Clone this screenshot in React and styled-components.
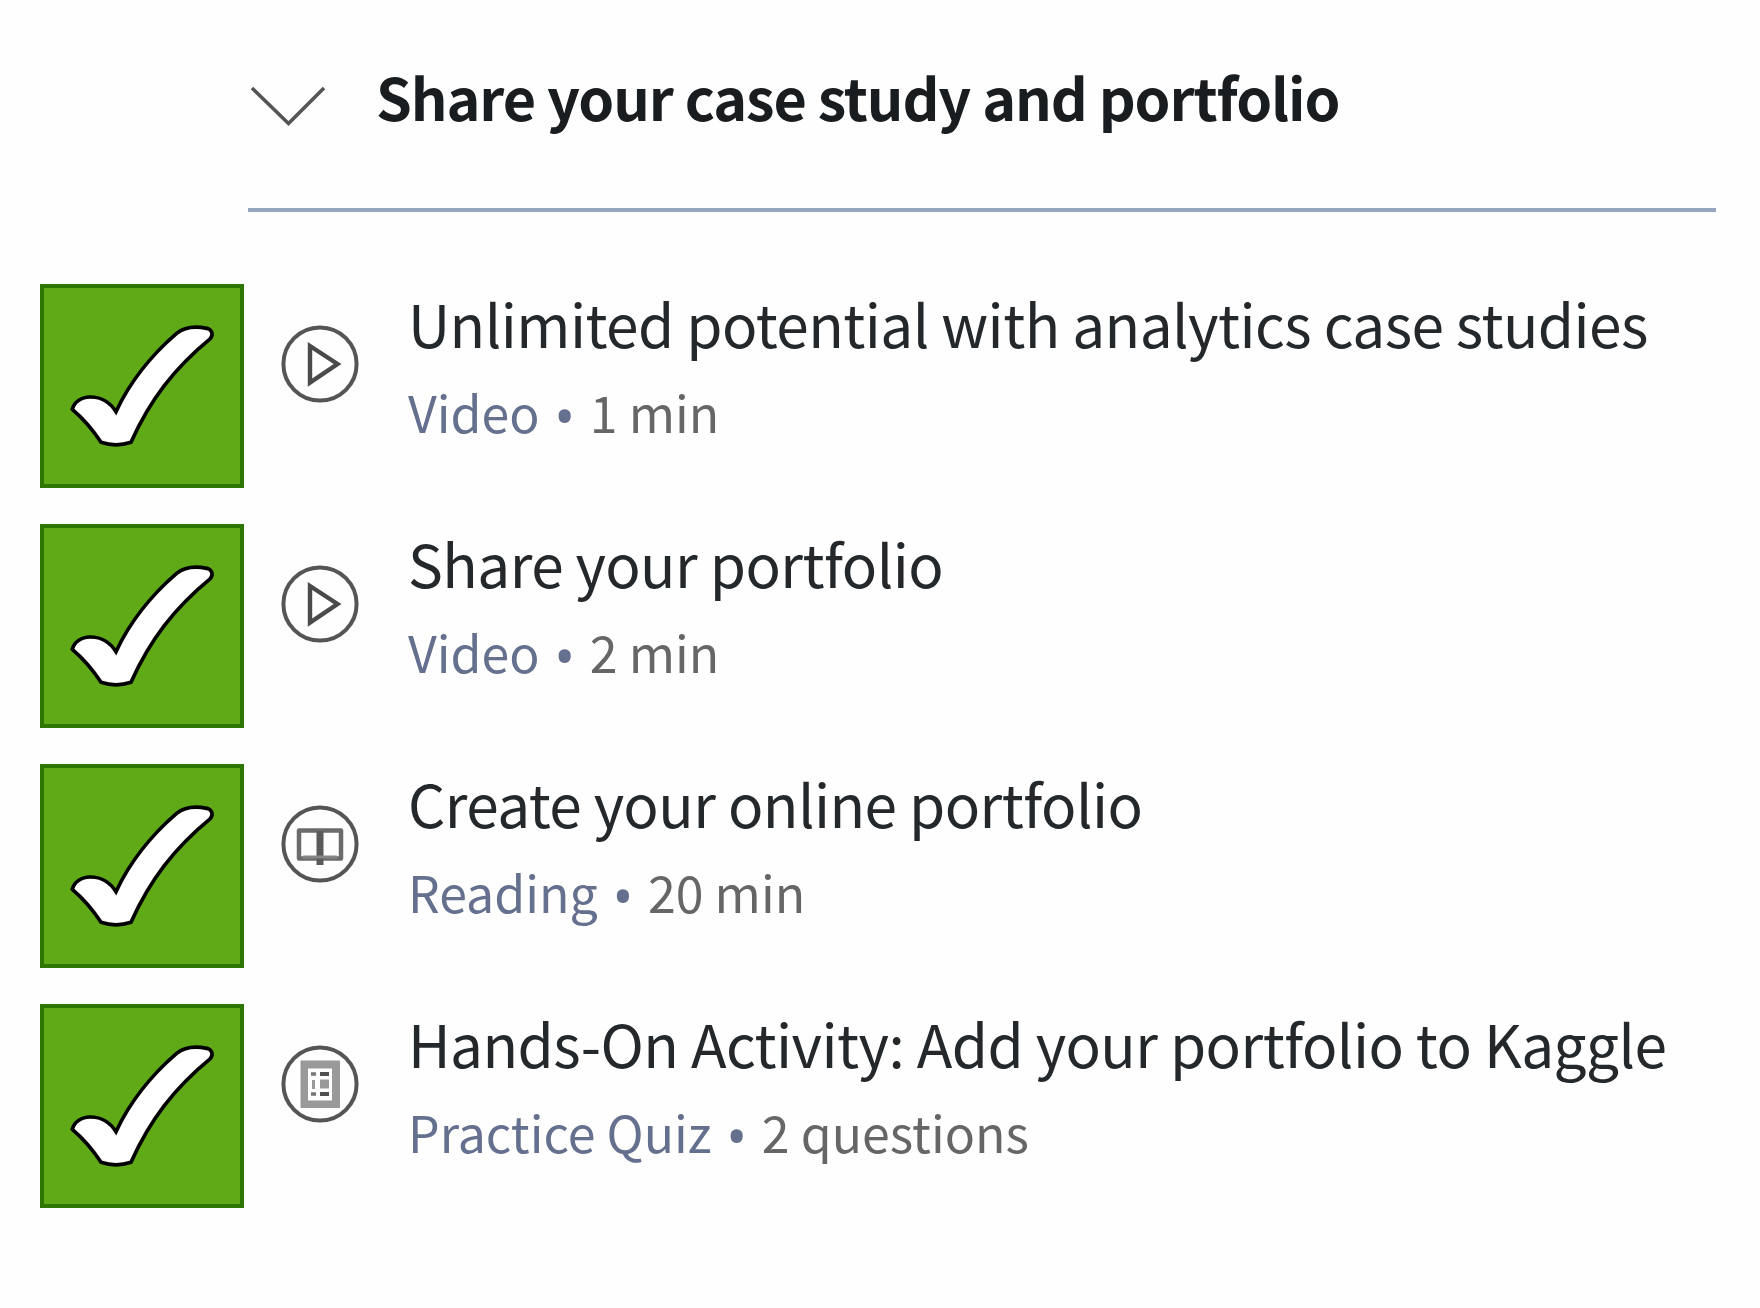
import React from 'react';
import styled, { createGlobalStyle } from 'styled-components';

const GlobalStyle = createGlobalStyle`
  * { box-sizing: border-box; }
  body { margin: 0; background: #fefefe; }
`;

const Page = styled.main`
  width: 1760px;
  height: 1308px;
  padding: 55px 44px 0 40px;
  overflow: hidden;
  background: #fefefe;
  font-family: "Noto Sans CJK SC", "Noto Sans", sans-serif;
`;

const Header = styled.header`
  display: flex;
  align-items: flex-start;
  margin-left: 208px;
  height: 157px;
  border-bottom: 4px solid #97a6c0;
`;

const Chevron = styled.svg`
  flex: none;
  width: 80px;
  height: 50px;
  margin: 25px 48px 0 0;
`;

const Heading = styled.h1`
  margin: 0;
  font-size: 57.5px;
  line-height: 82px;
  font-weight: 700;
  letter-spacing: -1.1px;
  white-space: nowrap;
  color: #1a1d20;
`;

const List = styled.ul`
  display: flex;
  flex-direction: column;
  gap: 36px;
  margin: 72px 0 0;
  padding: 0;
  list-style: none;
`;

const Row = styled.li`
  display: flex;
  align-items: flex-start;
  height: 204px;
`;

const DoneBox = styled.svg`
  flex: none;
  width: 204px;
  height: 204px;
`;

const KindIcon = styled.svg`
  flex: none;
  width: 80px;
  height: 80px;
  margin: 40px 0 0 36px;
`;

const Details = styled.div`
  display: flex;
  flex-direction: column;
  margin-left: 48px;
`;

const Title = styled.h2`
  margin: 0;
  font-size: 58.5px;
  line-height: 78px;
  font-weight: 400;
  letter-spacing: -0.56px;
  white-space: nowrap;
  color: #25282b;
`;

const Meta = styled.p`
  margin: 0;
  font-size: 50px;
  line-height: 98px;
  white-space: nowrap;
  color: #666;
`;

const Kind = styled.span`
  color: #64708d;
`;

const Dot = styled.span`
  margin: 0 3px;
  font-family: "Open Sans", sans-serif;
  font-size: 58px;
  line-height: 0;
  vertical-align: -5px;
  color: #64708d;
`;

function Done() {
  return (
    <DoneBox viewBox="60 42 612 612">
      <rect x="66" y="48" width="600" height="600" fill="#60a917" stroke="#2d7600" strokeWidth="12" />
      <path
        d="M157 418C166 373 248 362 288 425C330 334 400 250 470 190C495 170 525 168 560 175C576 179 581 193 571 206C463 295 390 389 333 517Q288 532 243 517Q208 462 157 418Z"
        fill="#fff"
        stroke="#000"
        strokeWidth="11"
      />
    </DoneBox>
  );
}

const glyphs = {
  video: <path d="M30 22V58.5L57.5 40Z" fill="none" stroke="#4a4a4a" strokeWidth="4.4" />,
  reading: (
    <g fill="none">
      <path d="M19 26.5H61V54.5H19Z" stroke="#6b6b6b" strokeWidth="4.5" strokeLinejoin="round" />
      <path d="M40 27V61" stroke="#5a5a5a" strokeWidth="7" />
      <path d="M23 53H57" stroke="#858585" strokeWidth="3" />
    </g>
  ),
  quiz: (
    <g>
      <path d="M20.5 16.5H60V64H20.5Z" fill="#999" />
      <path d="M28 24.5H52V56.5H28Z" fill="#fefefe" />
      <path d="M31 30H36M31 50H36" stroke="#777" strokeWidth="3.5" />
      <path d="M40 30H49M40 50H49" stroke="#505050" strokeWidth="4" />
      <path d="M40 40H49" stroke="#999" strokeWidth="9" />
      <path d="M33.5 36V45" stroke="#999" strokeWidth="3" />
    </g>
  ),
};

const items = [
  { icon: 'video', title: 'Unlimited potential with analytics case studies', kind: 'Video', length: '1 min' },
  { icon: 'video', title: 'Share your portfolio', kind: 'Video', length: '2 min' },
  { icon: 'reading', title: 'Create your online portfolio', kind: 'Reading', length: '20 min' },
  { icon: 'quiz', title: 'Hands-On Activity: Add your portfolio to Kaggle', kind: 'Practice Quiz', length: '2 questions' },
];

export default function App() {
  return (
    <>
      <GlobalStyle />
      <Page>
        <Header>
          <Chevron viewBox="0 0 80 50">
            <path d="M4 8L40.5 43.5L76 8" fill="none" stroke="#555" strokeWidth="3.6" />
          </Chevron>
          <Heading>Share your case study and portfolio</Heading>
        </Header>
        <List>
          {items.map((item) => (
            <Row key={item.title}>
              <Done />
              <KindIcon viewBox="0 0 80 80">
                <circle cx="40" cy="40" r="36.6" fill="none" stroke="#555" strokeWidth="4" />
                {glyphs[item.icon]}
              </KindIcon>
              <Details>
                <Title>{item.title}</Title>
                <Meta>
                  <Kind>{item.kind}</Kind> <Dot>•</Dot> {item.length}
                </Meta>
              </Details>
            </Row>
          ))}
        </List>
      </Page>
    </>
  );
}
